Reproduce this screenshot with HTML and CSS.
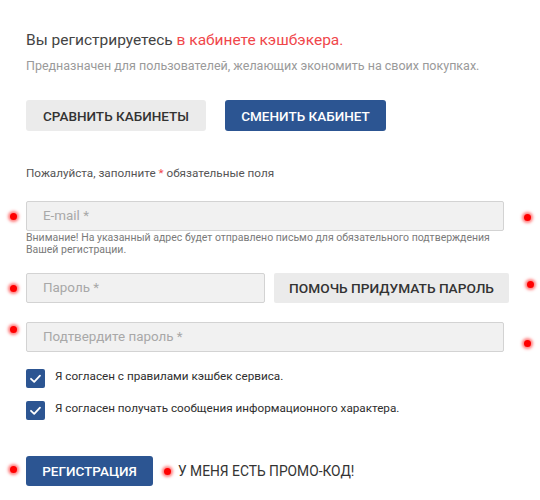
FILE: index.html
```html
<!DOCTYPE html>
<html lang="ru">
<head>
<meta charset="utf-8">
<link rel="stylesheet" href="styles.css">
</head>
<body>
<div class="page">
  <h1 class="title">Вы регистрируетесь <span class="accent">в кабинете кэшбэкера.</span></h1>
  <p class="subtitle">Предназначен для пользователей, желающих экономить на своих покупках.</p>
  <div class="switch">
    <button class="btn btn-light">СРАВНИТЬ КАБИНЕТЫ</button>
    <button class="btn btn-primary">СМЕНИТЬ КАБИНЕТ</button>
  </div>
  <p class="required">Пожалуйста, заполните <span class="accent">*</span> обязательные поля</p>
  <div class="field row">
    <span class="dot dot-l" style="top:12px"></span>
    <div class="input wide">E-mail *</div>
    <span class="dot dot-r" style="top:13px"></span>
  </div>
  <p class="note">Внимание! На указанный адрес будет отправлено письмо для обязательного подтверждения Вашей регистрации.</p>
  <div class="row pass">
    <span class="dot dot-l" style="top:12px"></span>
    <div class="input narrow">Пароль *</div>
    <button class="btn btn-light gen">ПОМОЧЬ ПРИДУМАТЬ ПАРОЛЬ</button>
    <span class="dot dot-r2" style="top:8px"></span>
  </div>
  <div class="row confirm">
    <span class="dot dot-l" style="top:4px"></span>
    <div class="input wide">Подтвердите пароль *</div>
    <span class="dot dot-r" style="top:18px"></span>
  </div>
  <div class="checks">
    <label class="check"><span class="box"><svg viewBox="0 0 19 19" width="19" height="19"><path d="M5 9.8 L8.2 12.8 L14 6.6" fill="none" stroke="#fff" stroke-width="1.8" stroke-linecap="round" stroke-linejoin="round"/></svg></span><span class="label">Я согласен с правилами кэшбек сервиса.</span></label>
    <label class="check"><span class="box"><svg viewBox="0 0 19 19" width="19" height="19"><path d="M5 9.8 L8.2 12.8 L14 6.6" fill="none" stroke="#fff" stroke-width="1.8" stroke-linecap="round" stroke-linejoin="round"/></svg></span><span class="label">Я согласен получать сообщения информационного характера.</span></label>
  </div>
  <div class="row submit">
    <span class="dot dot-l" style="top:10px"></span>
    <button class="btn btn-primary reg">РЕГИСТРАЦИЯ</button>
    <span class="promo"><span class="dot dot-inline"></span>У МЕНЯ ЕСТЬ ПРОМО-КОД!</span>
  </div>
</div>
</body>
</html>
```

FILE: styles.css
```css
* { box-sizing: border-box; }
html, body { margin: 0; padding: 0; background: #fff; }
body {
  font-family: Roboto, "Noto Sans", "Liberation Sans", sans-serif;
  color: #333;
}
.page {
  padding: 30px 0 0 26px;
  width: 540px;
}
.title {
  margin: 0;
  font-size: 15.5px;
  font-weight: 400;
  line-height: 20px;
  color: #444;
}
.accent { color: #f0474b; }
.subtitle {
  margin: 8px 0 0;
  font-size: 12.5px;
  line-height: 16px;
  color: #9a9a9a;
}
.switch {
  display: flex;
  gap: 19px;
  margin-top: 26px;
}
.btn {
  font-family: inherit;
  border: none;
  border-radius: 3px;
  height: 31px;
  font-size: 13.5px;
  font-weight: 500;
  padding: 0;
  cursor: pointer;
}
.btn-light {
  background: #ebebeb;
  color: #333;
  width: 180px;
}
.btn-primary {
  background: #2c5592;
  color: #fff;
  width: 161px;
}
.required {
  margin: 34px 0 0;
  font-size: 11.7px;
  line-height: 16px;
  color: #555;
}
.row {
  position: relative;
  display: flex;
  align-items: center;
}
.field { margin-top: 20px; }
.input {
  height: 30px;
  background: #f1f1f1;
  border: 1px solid #d3d3d3;
  border-radius: 2px;
  font-size: 13.4px;
  color: #a8a8a8;
  padding-left: 16px;
  line-height: 28px;
}
.wide { width: 478px; }
.narrow { width: 239px; }
.note {
  margin: 1px 0 0;
  font-size: 10.5px;
  line-height: 12px;
  color: #7a7a7a;
  width: 480px;
}
.pass {
  margin-top: 17px;
  gap: 9px;
}
.gen {
  width: 235px;
  height: 30px;
  border-radius: 2px;
  font-size: 13.7px;
}
.confirm { margin-top: 19px; }
.checks {
  margin-top: 17px;
  display: flex;
  flex-direction: column;
  gap: 13px;
}
.check {
  display: flex;
  align-items: flex-start;
  gap: 10px;
}
.box {
  width: 19px;
  height: 19px;
  border-radius: 2px;
  background: #2c5592;
  display: block;
  flex: none;
}
.box svg { display: block; }
.label {
  font-size: 11.7px;
  font-weight: 400;
  line-height: 15px;
  color: #2e2e2e;
}
.submit {
  margin-top: 36px;
  gap: 12px;
}
.reg {
  width: 127px;
  height: 30px;
  font-size: 13.5px;
}
.promo {
  position: relative;
  font-size: 13.8px;
  color: #333;
  padding-left: 13px;
}
.dot {
  position: absolute;
  width: 7px;
  height: 7px;
  border-radius: 50%;
  background: #ff0000;
  box-shadow: 0 0 3px 2px rgba(255, 0, 0, 0.5);
}
.dot-l { left: -16px; }
.dot-r { left: 498px; }
.dot-r2 { left: 501px; }
.dot-inline { left: -1px; top: 5px; }
```
